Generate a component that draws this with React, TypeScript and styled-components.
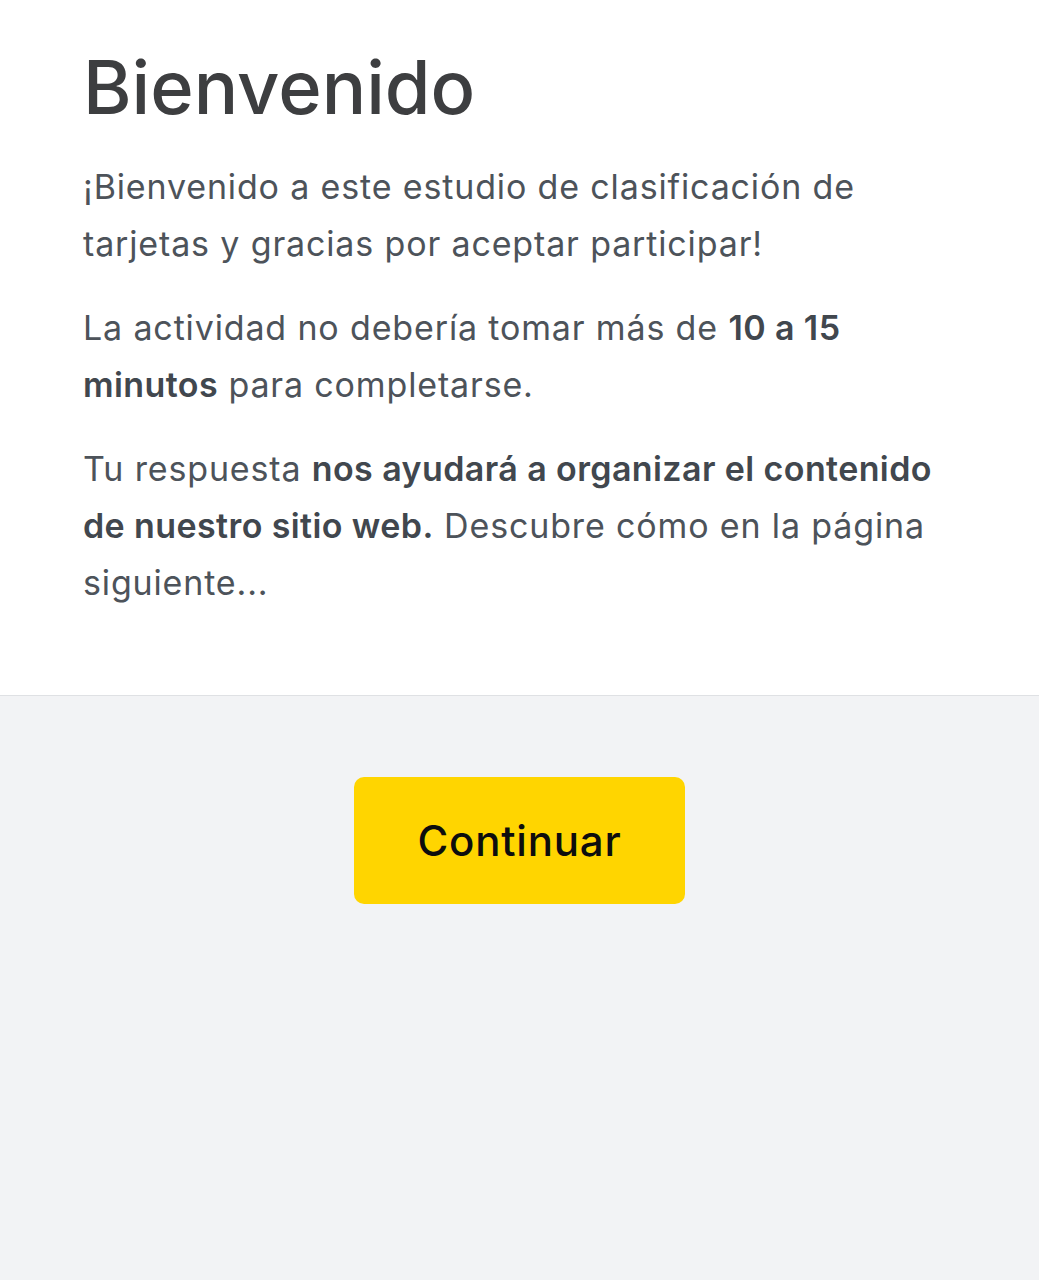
import React from "react";
import styled, { createGlobalStyle } from "styled-components";

const Global = createGlobalStyle`
  html, body { margin: 0; padding: 0; background: #f2f3f5; }
  body { font-family: Inter, "Noto Sans", sans-serif; -webkit-font-smoothing: antialiased; }
`;

const Page = styled.div`
  min-height: 1280px;
  display: flex;
  flex-direction: column;
  background: #f2f3f5;
`;

const Content = styled.section`
  background: #ffffff;
  padding: 41px 80px 84px 83px;
  border-bottom: 1px solid #dfe1e4;
`;

const Title = styled.h1`
  margin: 0 0 25px 0;
  font-size: 74px;
  font-weight: 500;
  line-height: 92px;
  color: #3d3e40;
  letter-spacing: 0px;
`;

const Para = styled.p`
  margin: 0 0 27px 0;
  font-size: 34px;
  line-height: 57px;
  color: #4d535a;
  font-weight: 400;
  letter-spacing: 0.85px;
  &:last-child { margin-bottom: 0; }
  strong { font-weight: 600; color: #41474e; letter-spacing: 0.4px; }
`;

const Footer = styled.section`
  flex: 1;
  display: flex;
  justify-content: center;
  padding-top: 81px;
`;

const Button = styled.button`
  width: 331px;
  height: 127px;
  border: none;
  border-radius: 10px;
  background: #ffd500;
  color: #0d0d0d;
  font-family: Inter, "Noto Sans", sans-serif;
  font-size: 42px;
  font-weight: 500;
  letter-spacing: 0.8px;
  cursor: pointer;
`;

export default function App() {
  return (
    <Page>
      <Global />
      <Content>
        <Title>Bienvenido</Title>
        <Para>¡Bienvenido a este estudio de clasificación de tarjetas y gracias por aceptar participar!</Para>
        <Para>
          La actividad no debería tomar más de <strong>10 a 15 minutos</strong> para completarse.
        </Para>
        <Para>
          Tu respuesta <strong>nos ayudará a organizar el contenido de nuestro sitio web.</strong> Descubre cómo en la página siguiente...
        </Para>
      </Content>
      <Footer>
        <Button>Continuar</Button>
      </Footer>
    </Page>
  );
}
